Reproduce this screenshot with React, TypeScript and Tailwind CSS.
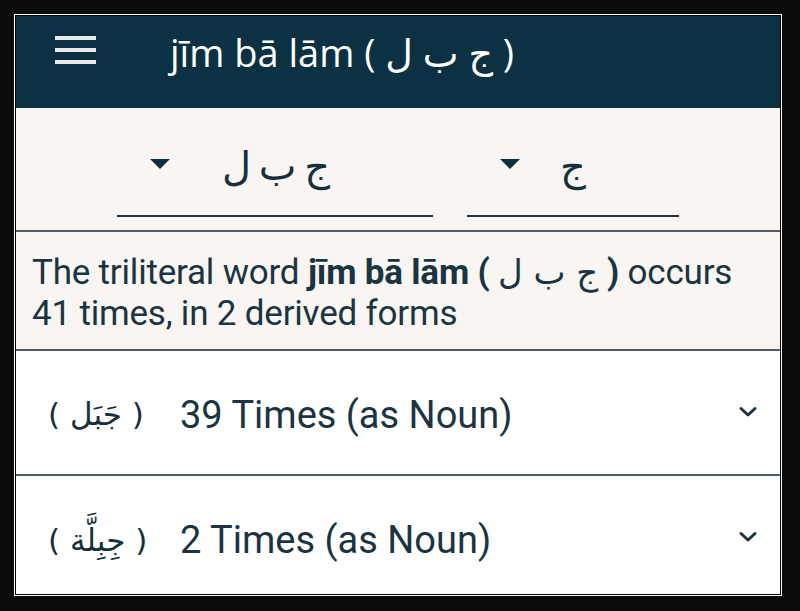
import React from "react";

const Chevron = () => (
  <svg width="20" height="14" viewBox="0 0 20 14" fill="none" className="mb-[6px]">
    <path d="M3 3.5 L10 10 L17 3.5" stroke="#1b3441" strokeWidth="3" strokeLinecap="round" strokeLinejoin="round" />
  </svg>
);

const Tri = () => (
  <svg width="20" height="10" viewBox="0 0 20 10">
    <path d="M0 0 L20 0 L10 10 Z" fill="#0f2f3f" />
  </svg>
);

export default function App() {
  return (
    <div className="w-[800px] h-[611px] bg-[#0b0b0b] pt-[14px] pl-[14px]">
      <div className="w-[768px] h-[582px] border border-white bg-black p-[1px]">
        <div className="w-[764px] h-[578px] flex flex-col overflow-hidden bg-white">
          {/* Header */}
          <div className="h-[92px] shrink-0 bg-[#0b3142] flex items-start pl-[39px]">
            <div className="mt-[20px] flex flex-col gap-[8px] w-[41px]">
              <div className="h-[4px] bg-[#ecebea]" />
              <div className="h-[4px] bg-[#ecebea]" />
              <div className="h-[4px] bg-[#ecebea]" />
            </div>
            <div
              className="mt-[17px] ml-[74px] text-[38px] text-white leading-none whitespace-nowrap"
              style={{ fontFamily: '"Open Sans", "DejaVu Sans", sans-serif' }}
            >
              jīm bā lām ( ج ب ل )
            </div>
          </div>
          {/* Dropdowns */}
          <div className="h-[124px] shrink-0 bg-[#f8f5f2] flex items-start pl-[101px] pt-[36px] gap-[34px] border-b-2 border-[#4d5b63]">
            <div className="w-[316px] h-[73px] border-b-2 border-[#1d3440] flex items-start">
              <div className="pl-[33px] pt-[15px]"><Tri /></div>
              <div
                className="ml-[52px] text-[40px] leading-none text-[#17303d] pt-[2px] [word-spacing:-5px]"
                style={{ fontFamily: '"DejaVu Sans", sans-serif' }}
              >
                ج ب ل
              </div>
            </div>
            <div className="w-[212px] h-[73px] border-b-2 border-[#1d3440] flex items-start">
              <div className="pl-[33px] pt-[15px]"><Tri /></div>
              <div
                className="ml-[40px] text-[40px] leading-none text-[#17303d] pt-[2px]"
                style={{ fontFamily: '"DejaVu Sans", sans-serif' }}
              >
                ج
              </div>
            </div>
          </div>
          {/* Description */}
          <div
            className="h-[119px] shrink-0 bg-[#f8f5f2] px-[16px] pt-[20px] text-[35px] leading-[41px] text-[#1b3441] tracking-[-0.2px] border-b-2 border-[#4d5b63] whitespace-nowrap"
            style={{ fontFamily: 'Roboto, "DejaVu Sans", sans-serif' }}
          >
            The triliteral word{" "}
            <span className="font-bold">
              jīm bā lām ({" "}
              <span className="font-normal text-[34px] leading-none" style={{ fontFamily: '"DejaVu Sans", sans-serif' }}>
                ج ب ل
              </span>{" "}
              )
            </span>{" "}
            occurs
            <br />
            41 times, in 2 derived forms
          </div>
          {/* Items */}
          <div className="h-[125px] shrink-0 flex items-center border-b-2 border-[#4d5b63] pl-[32px] pr-[22px] pt-[4px]">
            <div
              className="w-[132px] text-[31px] text-[#17303d] leading-none"
              style={{ fontFamily: '"DejaVu Sans", sans-serif' }}
            >
              ( جَبَل )
            </div>
            <div
              className="flex-1 text-[38px] text-[#1b3441] leading-none"
              style={{ fontFamily: 'Roboto, sans-serif' }}
            >
              39 Times (as Noun)
            </div>
            <Chevron />
          </div>
          <div className="flex-1 flex items-center pl-[32px] pr-[22px] pt-[10px]">
            <div
              className="w-[132px] text-[31px] text-[#17303d] leading-none"
              style={{ fontFamily: '"DejaVu Sans", sans-serif' }}
            >
              ( جِبِلَّة )
            </div>
            <div
              className="flex-1 text-[38px] text-[#1b3441] leading-none"
              style={{ fontFamily: 'Roboto, sans-serif' }}
            >
              2 Times (as Noun)
            </div>
            <Chevron />
          </div>
        </div>
      </div>
    </div>
  );
}
